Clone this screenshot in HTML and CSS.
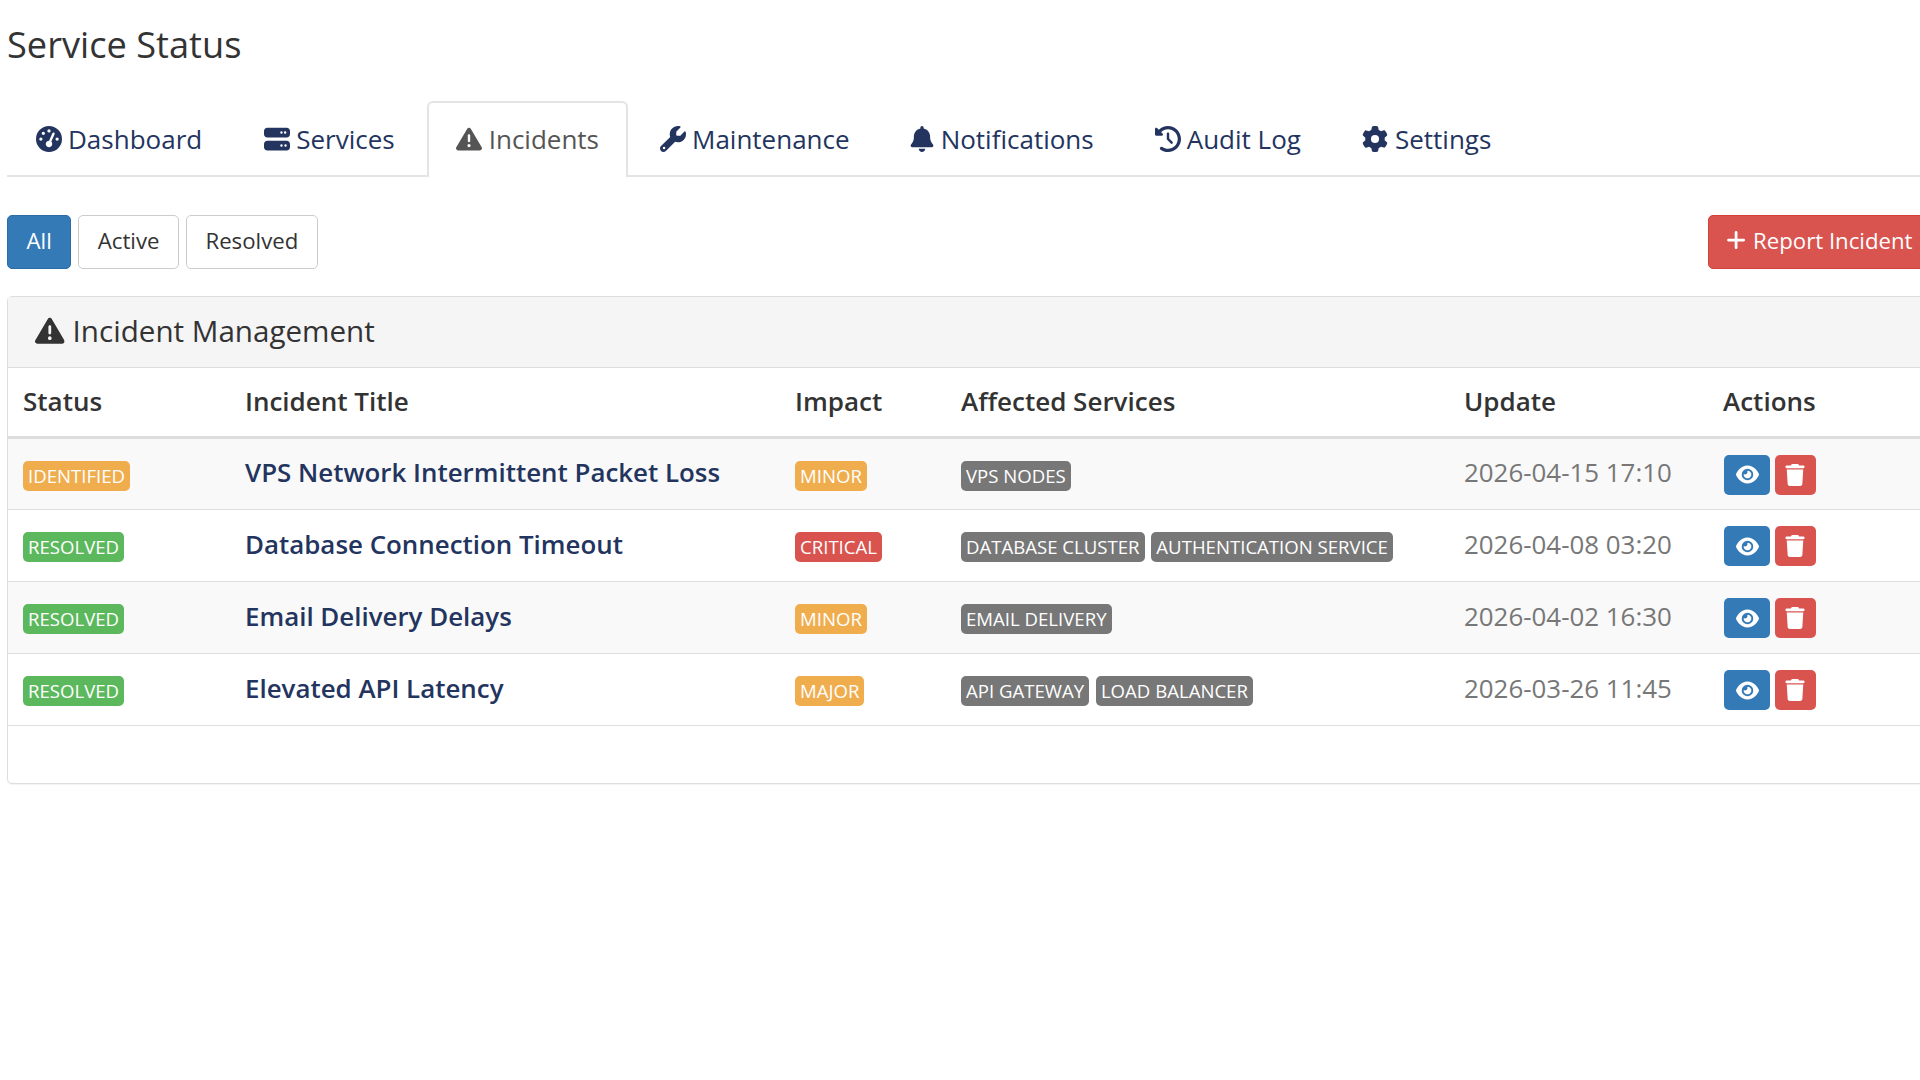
FILE: index.html
```html
<!DOCTYPE html>
<html lang="en">

<head>
    <meta charset="UTF-8">
    <meta name="viewport" content="width=device-width, initial-scale=1.0">
    <title>Service Status</title>
    <link rel="stylesheet" href="styles.css">
</head>

<body>
    <svg class="sprite" xmlns="http://www.w3.org/2000/svg">
        <symbol id="i-gauge" viewBox="0 0 512 512"><path d="M0 256a256 256 0 1 1 512 0A256 256 0 1 1 0 256zM288 96a32 32 0 1 0 -64 0 32 32 0 1 0 64 0zM256 416c35.3 0 64-28.7 64-64c0-17.4-6.9-33.1-18.1-44.6L366 161.7c5.3-12.1-.2-26.3-12.3-31.6s-26.3 .2-31.6 12.3L257.9 288c-.6 0-1.3 0-1.9 0c-35.3 0-64 28.7-64 64s28.7 64 64 64zM176 144a32 32 0 1 0 -64 0 32 32 0 1 0 64 0zM96 288a32 32 0 1 0 0-64 32 32 0 1 0 0 64zm352-32a32 32 0 1 0 -64 0 32 32 0 1 0 64 0z"/></symbol>
        <symbol id="i-server" viewBox="0 0 512 512"><path d="M64 32C28.7 32 0 60.7 0 96v64c0 35.3 28.7 64 64 64H448c35.3 0 64-28.7 64-64V96c0-35.3-28.7-64-64-64H64zm280 72a24 24 0 1 1 0 48 24 24 0 1 1 0-48zm48 24a24 24 0 1 1 48 0 24 24 0 1 1 -48 0zM64 288c-35.3 0-64 28.7-64 64v64c0 35.3 28.7 64 64 64H448c35.3 0 64-28.7 64-64V352c0-35.3-28.7-64-64-64H64zm280 72a24 24 0 1 1 0 48 24 24 0 1 1 0-48zm56 24a24 24 0 1 1 48 0 24 24 0 1 1 -48 0z"/></symbol>
        <symbol id="i-warning" viewBox="0 0 512 512"><path d="M256 32c14.2 0 27.3 7.5 34.5 19.8l216 368c7.3 12.4 7.3 27.7 .2 40.1S486.3 480 472 480H40c-14.3 0-27.6-7.7-34.7-20.1s-7-27.8 .2-40.1l216-368C228.7 39.5 241.8 32 256 32zm0 128c-13.3 0-24 10.7-24 24V296c0 13.3 10.7 24 24 24s24-10.7 24-24V184c0-13.3-10.7-24-24-24zm32 224a32 32 0 1 0 -64 0 32 32 0 1 0 64 0z"/></symbol>
        <symbol id="i-wrench" viewBox="0 0 512 512"><path d="M352 320c88.4 0 160-71.6 160-160c0-15.3-2.2-30.1-6.2-44.2c-3.1-10.8-16.4-13.2-24.3-5.3l-76.8 76.8c-3 3-7.1 4.7-11.3 4.7H336c-8.8 0-16-7.2-16-16V118.6c0-4.2 1.7-8.3 4.7-11.3l76.8-76.8c7.9-7.9 5.4-21.2-5.3-24.3C382.1 2.2 367.3 0 352 0C263.6 0 192 71.6 192 160c0 19.1 3.4 37.5 9.5 54.5L19.9 396.1C7.2 408.8 0 426.1 0 444.1C0 481.6 30.4 512 67.9 512c18 0 35.3-7.2 48-19.9L297.5 310.5c17 6.2 35.4 9.5 54.5 9.5zM80 408a24 24 0 1 1 0 48 24 24 0 1 1 0-48z"/></symbol>
        <symbol id="i-bell" viewBox="0 0 448 512"><path d="M224 0c-17.7 0-32 14.3-32 32V51.2C119 66 64 130.6 64 208v18.8c0 47-17.3 92.4-48.5 127.6l-7.4 8.3c-8.4 9.4-10.4 22.9-5.3 34.4S19.4 416 32 416H416c12.6 0 24-7.4 29.2-18.9s3.1-25-5.3-34.4l-7.4-8.3C401.3 319.2 384 273.9 384 226.8V208c0-77.4-55-142-128-156.8V32c0-17.7-14.3-32-32-32zm45.3 493.3c12-12 18.7-28.3 18.7-45.3H224 160c0 17 6.7 33.3 18.7 45.3s28.3 18.7 45.3 18.7s33.3-6.7 45.3-18.7z"/></symbol>
        <symbol id="i-history" viewBox="0 0 512 512"><path d="M75 75L41 41C25.9 25.9 0 36.6 0 57.9V168c0 13.3 10.7 24 24 24H134.1c21.4 0 32.1-25.9 17-41l-30.8-30.8C155 85.5 203 64 256 64c106 0 192 86 192 192s-86 192-192 192c-40.8 0-78.6-12.7-109.7-34.4c-14.5-10.1-34.4-6.6-44.6 7.9s-6.6 34.4 7.9 44.6C151.2 495 201.7 512 256 512c141.4 0 256-114.6 256-256S397.4 0 256 0C185.3 0 121.3 28.7 75 75zm181 53c-13.3 0-24 10.7-24 24V256c0 6.4 2.5 12.5 7 17l72 72c9.4 9.4 24.6 9.4 33.9 0s9.4-24.6 0-33.9l-65-65V152c0-13.3-10.7-24-24-24z"/></symbol>
        <symbol id="i-gear" viewBox="0 0 512 512"><path d="M495.9 166.6c3.2 8.7 .5 18.4-6.4 24.6l-43.3 39.4c1.1 8.3 1.7 16.8 1.7 25.4s-.6 17.1-1.7 25.4l43.3 39.4c6.9 6.2 9.6 15.9 6.4 24.6c-4.4 11.9-9.7 23.3-15.8 34.3l-4.7 8.1c-6.6 11-14 21.4-22.1 31.2c-5.9 7.2-15.7 9.6-24.5 6.8l-55.7-17.7c-13.4 10.3-28.2 18.9-44 25.4l-12.5 57.1c-2 9.1-9 16.3-18.2 17.8c-13.8 2.3-28 3.5-42.5 3.5s-28.7-1.2-42.5-3.5c-9.2-1.5-16.2-8.7-18.2-17.8l-12.5-57.1c-15.8-6.5-30.6-15.1-44-25.4L83.1 425.9c-8.8 2.8-18.6 .3-24.5-6.8c-8.1-9.8-15.5-20.2-22.1-31.2l-4.7-8.1c-6.1-11-11.4-22.4-15.8-34.3c-3.2-8.7-.5-18.4 6.4-24.6l43.3-39.4C64.6 273.1 64 264.6 64 256s.6-17.1 1.7-25.4L22.4 191.2c-6.9-6.2-9.6-15.9-6.4-24.6c4.4-11.9 9.7-23.3 15.8-34.3l4.7-8.1c6.6-11 14-21.4 22.1-31.2c5.9-7.2 15.7-9.6 24.5-6.8l55.7 17.7c13.4-10.3 28.2-18.9 44-25.4l12.5-57.1c2-9.1 9-16.3 18.2-17.8C227.3 1.2 241.5 0 256 0s28.7 1.2 42.5 3.5c9.2 1.5 16.2 8.7 18.2 17.8l12.5 57.1c15.8 6.5 30.6 15.1 44 25.4l55.7-17.7c8.8-2.8 18.6-.3 24.5 6.8c8.1 9.8 15.5 20.2 22.1 31.2l4.7 8.1c6.1 11 11.4 22.4 15.8 34.3zM256 336a80 80 0 1 0 0-160 80 80 0 1 0 0 160z"/></symbol>
        <symbol id="i-plus" viewBox="0 0 448 512"><path d="M256 80c0-17.7-14.3-32-32-32s-32 14.3-32 32V224H48c-17.7 0-32 14.3-32 32s14.3 32 32 32H192V432c0 17.7 14.3 32 32 32s32-14.3 32-32V288H400c17.7 0 32-14.3 32-32s-14.3-32-32-32H256V80z"/></symbol>
        <symbol id="i-eye" viewBox="0 0 576 512"><path d="M288 32c-80.8 0-145.5 36.8-192.6 80.6C48.6 156 17.3 208 2.5 243.7c-3.3 7.9-3.3 16.7 0 24.6C17.3 304 48.6 356 95.4 399.4C142.5 443.2 207.2 480 288 480s145.5-36.8 192.6-80.6c46.8-43.5 78.1-95.4 93-131.1c3.3-7.9 3.3-16.7 0-24.6c-14.9-35.7-46.2-87.7-93-131.1C433.5 68.8 368.8 32 288 32zM144 256a144 144 0 1 1 288 0 144 144 0 1 1 -288 0zm144-64c0 35.3-28.7 64-64 64c-7.1 0-13.9-1.2-20.3-3.3c-5.5-1.8-11.9 1.6-11.7 7.4c.3 6.9 1.3 13.8 3.2 20.7c13.7 51.2 66.4 81.6 117.6 67.9s81.6-66.4 67.9-117.6c-11.1-41.5-47.8-69.4-88.6-71.1c-5.8-.2-9.2 6.1-7.4 11.7c2.1 6.4 3.3 13.2 3.3 20.3z"/></symbol>
        <symbol id="i-trash" viewBox="0 0 448 512"><path d="M135.2 17.7L128 32H32C14.3 32 0 46.3 0 64S14.3 96 32 96H416c17.7 0 32-14.3 32-32s-14.3-32-32-32H320l-7.2-14.3C307.4 6.8 296.3 0 284.2 0H163.8c-12.1 0-23.2 6.8-28.6 17.7zM416 128H32L53.2 467c1.6 25.3 22.6 45 47.9 45H346.9c25.3 0 46.3-19.7 47.9-45L416 128z"/></symbol>
    </svg>

    <div class="page">
        <h1 class="page-title">Service Status</h1>

        <nav class="tabs">
            <a class="tab" href="#"><svg class="icon"><use href="#i-gauge"/></svg>Dashboard</a>
            <a class="tab" href="#"><svg class="icon"><use href="#i-server"/></svg>Services</a>
            <a class="tab active" href="#"><svg class="icon"><use href="#i-warning"/></svg>Incidents</a>
            <a class="tab" href="#"><svg class="icon"><use href="#i-wrench"/></svg>Maintenance</a>
            <a class="tab" href="#"><svg class="icon icon-bell"><use href="#i-bell"/></svg>Notifications</a>
            <a class="tab" href="#"><svg class="icon"><use href="#i-history"/></svg>Audit Log</a>
            <a class="tab" href="#"><svg class="icon"><use href="#i-gear"/></svg>Settings</a>
        </nav>

        <section class="toolbar">
            <div class="filters">
                <button class="btn btn-primary">All</button>
                <button class="btn">Active</button>
                <button class="btn">Resolved</button>
            </div>
            <button class="btn btn-danger"><svg class="icon icon-plus"><use href="#i-plus"/></svg>Report Incident</button>
        </section>

        <section class="card">
            <header class="card-heading">
                <svg class="icon"><use href="#i-warning"/></svg>Incident Management
            </header>
            <table class="incidents">
                <colgroup>
                    <col class="col-status">
                    <col class="col-title">
                    <col class="col-impact">
                    <col class="col-services">
                    <col class="col-update">
                    <col class="col-actions">
                </colgroup>
                <thead>
                    <tr>
                        <th>Status</th>
                        <th>Incident Title</th>
                        <th>Impact</th>
                        <th>Affected Services</th>
                        <th>Update</th>
                        <th>Actions</th>
                    </tr>
                </thead>
                <tbody>
                    <tr>
                        <td><span class="label label-warning">IDENTIFIED</span></td>
                        <td class="incident-title">VPS Network Intermittent Packet Loss</td>
                        <td><span class="label label-warning">MINOR</span></td>
                        <td><span class="label">VPS NODES</span></td>
                        <td class="date">2026-04-15 17:10</td>
                        <td class="actions">
                            <button class="action action-view"><svg class="icon"><use href="#i-eye"/></svg></button>
                            <button class="action action-delete"><svg class="icon"><use href="#i-trash"/></svg></button>
                        </td>
                    </tr>
                    <tr>
                        <td><span class="label label-success">RESOLVED</span></td>
                        <td class="incident-title">Database Connection Timeout</td>
                        <td><span class="label label-danger">CRITICAL</span></td>
                        <td><span class="label">DATABASE CLUSTER</span> <span class="label">AUTHENTICATION SERVICE</span></td>
                        <td class="date">2026-04-08 03:20</td>
                        <td class="actions">
                            <button class="action action-view"><svg class="icon"><use href="#i-eye"/></svg></button>
                            <button class="action action-delete"><svg class="icon"><use href="#i-trash"/></svg></button>
                        </td>
                    </tr>
                    <tr>
                        <td><span class="label label-success">RESOLVED</span></td>
                        <td class="incident-title">Email Delivery Delays</td>
                        <td><span class="label label-warning">MINOR</span></td>
                        <td><span class="label">EMAIL DELIVERY</span></td>
                        <td class="date">2026-04-02 16:30</td>
                        <td class="actions">
                            <button class="action action-view"><svg class="icon"><use href="#i-eye"/></svg></button>
                            <button class="action action-delete"><svg class="icon"><use href="#i-trash"/></svg></button>
                        </td>
                    </tr>
                    <tr>
                        <td><span class="label label-success">RESOLVED</span></td>
                        <td class="incident-title">Elevated API Latency</td>
                        <td><span class="label label-warning">MAJOR</span></td>
                        <td><span class="label">API GATEWAY</span> <span class="label">LOAD BALANCER</span></td>
                        <td class="date">2026-03-26 11:45</td>
                        <td class="actions">
                            <button class="action action-view"><svg class="icon"><use href="#i-eye"/></svg></button>
                            <button class="action action-delete"><svg class="icon"><use href="#i-trash"/></svg></button>
                        </td>
                    </tr>
                </tbody>
            </table>
        </section>
    </div>
</body>

</html>
```

FILE: styles.css
```css
html {
    box-sizing: border-box;
    font-family: "Open Sans", sans-serif;
    font-size: 26px;
    color: #333;
}

*,
*:before,
*:after {
    box-sizing: inherit;
}

body {
    margin: 0;
    min-height: 100vh;
    background-color: #fff;
    overflow: hidden;
}

.sprite {
    display: none;
}

.icon {
    width: 1em;
    height: 1em;
    fill: currentColor;
    vertical-align: -.125em;
}

/* the page is wider than the window, the right side is cut */
.page {
    width: 1931px;
    margin-left: 7px;
}

.page-title {
    margin: 0;
    padding-top: 19px;
    height: 101px;
    font-size: 36.2px;
    font-weight: 400;
    line-height: 50px;
}

.tabs {
    display: flex;
    height: 76px;
    border-bottom: 2px solid #e4e4e4;
}

.tab {
    height: 76px;
    padding: 0 27px;
    border: 2px solid transparent;
    border-bottom: 0;
    border-radius: 6px 6px 0 0;
    color: #23345f;
    text-decoration: none;
    line-height: 72px;
    margin-right: 3px;
}

.tab .icon {
    margin-right: 6px;
}

.tab:first-child {
    margin-right: 4px;
}

.tab:nth-child(4) {
    margin-right: 1px;
}

.tab:last-child .icon,
.tab.active .icon {
    margin-right: 7px;
}

.tab.active {
    border-color: #e4e4e4;
    background-color: #fff;
    color: #555;
}

.toolbar {
    display: flex;
    justify-content: space-between;
    margin-top: 38px;
}

.filters {
    display: flex;
    gap: 7px;
}

.btn {
    height: 54px;
    padding: 0 18.5px 4px;
    border: 1px solid #ccc;
    border-radius: 5px;
    background-color: #fff;
    color: #333;
    font-family: inherit;
    font-size: 22.2px;
}

.btn-primary {
    border-color: #2e6da4;
    background-color: #337ab7;
    color: #fff;
}

.btn-danger {
    margin-right: 6px;
    padding-left: 16px;
    border-color: #d43f3a;
    background-color: #d9534f;
    color: #fff;
}

.icon-plus {
    margin-right: 6.4px;
}

.card {
    margin-top: 27px;
    padding-bottom: 57px;
    border: 1px solid #ddd;
    border-radius: 5px;
    box-shadow: 0 1px 1px rgba(0, 0, 0, .05);
}

.card-heading {
    height: 71px;
    padding: 0 27px;
    border-bottom: 1px solid #ddd;
    background-color: #f5f5f5;
    font-size: 29.6px;
    line-height: 68px;
}

.card-heading .icon {
    margin-right: 8px;
}

.incidents {
    width: 100%;
    table-layout: fixed;
    border-collapse: collapse;
}

.col-status { width: 222px; }
.col-title { width: 550px; }
.col-impact { width: 166px; }
.col-services { width: 503px; }
.col-update { width: 259px; }

.incidents th {
    height: 69px;
    padding: 0 15px 2px;
    border-bottom: 3px solid #ddd;
    font-size: 26px;
    font-weight: 600;
    text-align: left;
}

.incidents td {
    height: 72px;
    padding: 0 15px 2px;
    border-bottom: 1px solid #ddd;
    vertical-align: middle;
}

.incidents tbody tr:nth-child(odd) {
    background-color: #f9f9f9;
}

.incidents .incident-title {
    padding-bottom: 3px;
    color: #23345f;
    font-size: 25.9px;
    font-weight: 600;
}

.incidents .date {
    padding-bottom: 3px;
    color: #777;
    font-size: 25.9px;
}

.label {
    display: inline-block;
    height: 30px;
    padding: 0 5px;
    border-radius: 5px;
    background-color: #777;
    color: #fff;
    font-size: 18.6px;
    line-height: 30px;
    vertical-align: middle;
}

.label-warning {
    background-color: #f0ad4e;
}

.label-success {
    background-color: #5cb85c;
}

.label-danger {
    background-color: #d9534f;
}

.incidents .actions {
    padding-top: 2px;
    padding-bottom: 0;
    padding-left: 16px;
    font-size: 19px;
}

.action {
    height: 40px;
    padding: 0;
    border: 0;
    border-radius: 5px;
    color: #fff;
    font-size: 22px;
    vertical-align: middle;
}

.action .icon {
    display: block;
    margin: 0 auto;
}

.action-view {
    width: 46px;
    background-color: #337ab7;
}

.action-view .icon {
    font-size: 23px;
}

.action-delete {
    width: 41px;
    background-color: #d9534f;
}
```
